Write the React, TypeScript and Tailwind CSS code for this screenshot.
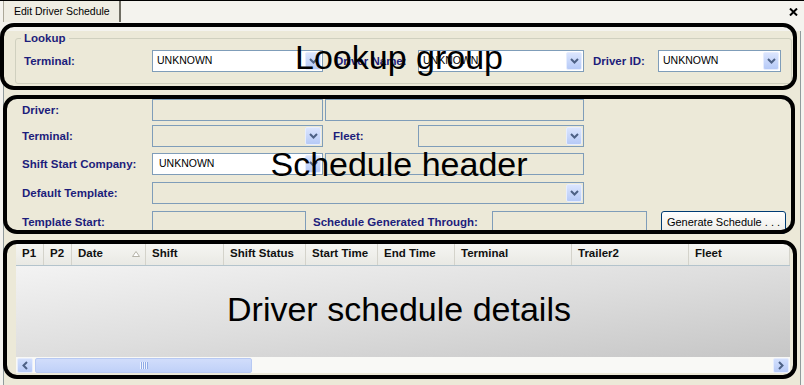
const lbl = 'shrink-0 text-[11.5px] font-bold leading-[22px] text-[#1d1d7b]'

function Chevron() {
  return (
    <svg width="9" height="6" viewBox="0 0 9 6">
      <path d="M1 1l3.5 3.5L8 1" fill="none" stroke="#4d6185" strokeWidth="2" />
    </svg>
  )
}

function DropButton() {
  return (
    <span className="ml-auto mr-px flex h-[18px] w-[16px] shrink-0 items-center justify-center rounded-[2px] border border-[#e6edfe] bg-gradient-to-b from-[#dbe5fe] to-[#b6caf7]">
      <Chevron />
    </span>
  )
}

function Combo({ className, value }: { className: string; value?: string }) {
  return (
    <div className={`flex h-[22px] shrink-0 items-center border border-[#7f9db9] ${className}`}>
      {value && <span className="text-[10.5px] text-black">{value}</span>}
      <DropButton />
    </div>
  )
}

function Field({ className }: { className: string }) {
  return <div className={`h-[22px] shrink-0 border border-[#7f9db9] ${className}`} />
}

const cols = [
  { name: 'P1', w: 'w-[28px]' },
  { name: 'P2', w: 'w-[28px]' },
  { name: 'Date', w: 'w-[74px]', sort: true },
  { name: 'Shift', w: 'w-[78px]' },
  { name: 'Shift Status', w: 'w-[82px]' },
  { name: 'Start Time', w: 'w-[72px]' },
  { name: 'End Time', w: 'w-[77px]' },
  { name: 'Terminal', w: 'w-[117px]' },
  { name: 'Trailer2', w: 'w-[117px]' },
  { name: 'Fleet', w: 'w-[101px]' },
]

function ScrollArrow({ dir }: { dir: 'left' | 'right' }) {
  return (
    <span className="flex h-[15px] w-[16px] shrink-0 items-center justify-center rounded-[2px] border border-[#e6edfe] bg-gradient-to-b from-[#d3e0fd] to-[#b8cbf7]">
      <svg width="6" height="9" viewBox="0 0 6 9">
        <path d={dir === 'left' ? 'M5 1L1.5 4.5 5 8' : 'M1 1l3.5 3.5L1 8'} fill="none" stroke="#4d6185" strokeWidth="2" />
      </svg>
    </span>
  )
}

function ScheduleGrid() {
  return (
    <div className="ml-[12px] mt-[9px] w-[774px]">
      {/* header */}
      <div className="flex h-[24px] border-b border-[#b3c3cc] bg-gradient-to-b from-[#f7f7f4] to-[#e9e9e4]">
        {cols.map(c => (
          <div
            key={c.name}
            className={`flex shrink-0 items-center justify-between border-r border-[#d4d3cb] pl-[6px] pr-[5px] text-[11.5px] font-bold text-[#111] ${c.w}`}
          >
            <span>{c.name}</span>
            {c.sort && (
              <svg width="8" height="6" viewBox="0 0 8 6">
                <path d="M4 0.5L7.5 5.5H0.5Z" fill="#fff" stroke="#b5b3a8" />
              </svg>
            )}
          </div>
        ))}
      </div>
      {/* body */}
      <div className="h-[91px] bg-gradient-to-br from-[#f3f3f3] via-[#dedede] to-[#c6c6c6]" />
      {/* horizontal scrollbar */}
      <div className="flex h-[16px] items-center gap-[2px] bg-[#f9f9f6] px-px">
        <ScrollArrow dir="left" />
        <span className="flex h-[15px] w-[217px] items-center justify-center rounded-[2px] border border-[#b7c9f3] bg-gradient-to-b from-[#d1ddfb] to-[#c0d1f8]">
          <svg width="8" height="7" viewBox="0 0 8 7">
            <path d="M0.5 0v7M2.5 0v7M4.5 0v7M6.5 0v7" stroke="#eef3fe" />
            <path d="M1.5 0v7M3.5 0v7M5.5 0v7M7.5 0v7" stroke="#8faae6" />
          </svg>
        </span>
        <span className="ml-auto" />
        <ScrollArrow dir="right" />
      </div>
    </div>
  )
}

export default function App() {
  return (
    <div className="relative h-[385px] w-[804px] overflow-hidden bg-[#f4f3ee] font-['Liberation_Sans',Arial,sans-serif]">
      {/* tab strip */}
      <div className="flex h-[22px] border-t border-black">
        <div className="ml-[3px] flex h-[21px] w-[118px] items-center border-l border-r-2 border-l-[#aca899] border-r-[#6f6d63] bg-[#efede3] pl-[10px] text-[10.5px] text-black">
          Edit Driver Schedule
        </div>
        <svg className="ml-auto mr-[6px] mt-[7px]" width="9" height="8" viewBox="0 0 9 8">
          <path d="M1 0.5l7 7M8 0.5l-7 7" stroke="#000" strokeWidth="2" />
        </svg>
      </div>

      {/* main panel */}
      <div className="mx-[3px] h-[361px] border-x border-b border-[#919b9c] bg-[#ece9d8]">
        {/* Lookup group */}
        <fieldset className="ml-[11px] mr-[8px] mt-[9px] rounded-[3px] border border-[#d0d0bf] pb-[11px]">
          <legend className="ml-[5px] px-[3px] text-[11.5px] font-bold leading-[14px] text-[#1d1d7b]">Lookup</legend>
          <div className="mt-[5px] flex h-[22px] items-center pl-[8px]">
            <span className={`${lbl} w-[128px]`}>Terminal:</span>
            <Combo className="w-[171px] bg-white pl-[4px]" value="UNKNOWN" />
            <span className={`${lbl} ml-[12px] w-[83px]`}>Driver Name:</span>
            <Combo className="w-[166px] bg-white pl-[4px]" value="UNKNOWN" />
            <span className={`${lbl} ml-[9px] w-[65px]`}>Driver ID:</span>
            <Combo className="w-[123px] bg-white pl-[4px]" value="UNKNOWN" />
          </div>
        </fieldset>

        {/* Schedule header */}
        <div className="pl-[18px]">
          <div className="mt-[15px] flex h-[22px]">
            <span className={`${lbl} w-[130px]`}>Driver:</span>
            <Field className="w-[171px]" />
            <Field className="ml-[2px] w-[259px]" />
          </div>
          <div className="mt-[4px] flex h-[22px]">
            <span className={`${lbl} w-[130px]`}>Terminal:</span>
            <Combo className="w-[171px]" />
            <span className={`${lbl} ml-[10px] w-[85px]`}>Fleet:</span>
            <Combo className="w-[166px]" />
          </div>
          <div className="mt-[6px] flex h-[22px]">
            <span className={`${lbl} w-[130px]`}>Shift Start Company:</span>
            <Combo className="w-[171px] bg-white pl-[6px]" value="UNKNOWN" />
            <Field className="ml-[2px] w-[259px]" />
          </div>
          <div className="mt-[7px] flex h-[22px]">
            <span className={`${lbl} w-[130px]`}>Default Template:</span>
            <Combo className="w-[432px]" />
          </div>
          <div className="mt-[7px] flex h-[22px] items-start">
            <span className={`${lbl} w-[130px]`}>Template Start:</span>
            <Field className="w-[154px]" />
            <span className={`${lbl} ml-[7px] w-[179px]`}>Schedule Generated Through:</span>
            <Field className="w-[155px]" />
            <button className="ml-[14px] h-[23px] w-[125px] shrink-0 rounded-[3px] border border-[#003c74] bg-gradient-to-b from-[#ffffff] to-[#ecebe6] text-[11px] text-black">
              Generate Schedule . . .
            </button>
          </div>
        </div>

        <ScheduleGrid />
      </div>

      {/* annotation overlay */}
      <div className="pointer-events-none absolute inset-0">
        <div className="absolute left-0 top-[23px] h-[67px] w-[797px] rounded-[14px] border-4 border-black" />
        <div className="absolute left-[3px] top-[95px] h-[139px] w-[792px] rounded-[14px] border-4 border-black" />
        <div className="absolute left-[3px] top-[240px] h-[139px] w-[794px] rounded-[14px] border-4 border-black" />
        <div className="absolute left-0 top-[40px] w-[798px] text-center text-[34px] leading-[34px] text-black">Lookup group</div>
        <div className="absolute left-0 top-[147px] w-[798px] text-center text-[34px] leading-[34px] text-black">Schedule header</div>
        <div className="absolute left-0 top-[292px] w-[798px] text-center text-[34px] leading-[34px] text-black">Driver schedule details</div>
      </div>
    </div>
  )
}
